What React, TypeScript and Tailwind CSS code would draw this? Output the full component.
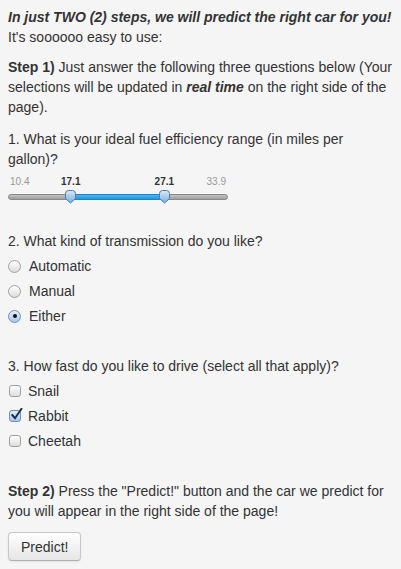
import { useState } from "react"

const MIN = 10.4
const MAX = 33.9
const TRACK_W = 220

const pct = (v: number) => ((v - MIN) / (MAX - MIN)) * TRACK_W

function Thumb({ value }: { value: number }) {
	return (
		<svg
			className="absolute top-[21px] -ml-[6.5px]"
			style={{ left: pct(value) }}
			width="13"
			height="14"
			viewBox="0 0 13 14">
			<defs>
				<linearGradient id="thumbFill" x1="0" y1="0" x2="0" y2="1">
					<stop offset="0" stopColor="#d9e9f8" />
					<stop offset="1" stopColor="#76aee3" />
				</linearGradient>
			</defs>
			<path
				d="M1.5 3.5 Q1.5 0.5 4.5 0.5 H8.5 Q11.5 0.5 11.5 3.5 V8.5 L6.5 13 L1.5 8.5 Z"
				fill="url(#thumbFill)"
				stroke="#4a7db5"
				strokeWidth="1"
			/>
		</svg>
	)
}

function RangeSlider({ from, to }: { from: number; to: number }) {
	return (
		<div className="relative h-[62px] w-[220px] font-['Liberation_Sans',Arial,sans-serif] text-[10px] leading-[12px]">
			<span className="absolute left-[2px] top-[7px] text-[#999]">{MIN}</span>
			<span className="absolute right-[2px] top-[7px] text-[#999]">{MAX}</span>
			<span className="absolute top-[7px] -translate-x-1/2 font-bold text-[#333]" style={{ left: pct(from) }}>
				{from}
			</span>
			<span className="absolute top-[7px] -translate-x-1/2 font-bold text-[#333]" style={{ left: pct(to) }}>
				{to}
			</span>
			<div className="absolute left-0 top-[25px] h-[6px] w-full rounded-full border border-[#8a8a8a] bg-gradient-to-b from-[#c4c4c4] to-[#9e9e9e]" />
			<div
				className="absolute top-[25px] h-[6px] border-y border-[#2780c0] bg-gradient-to-b from-[#4fb3ec] to-[#2496d8]"
				style={{ left: pct(from), width: pct(to) - pct(from) }}
			/>
			<Thumb value={from} />
			<Thumb value={to} />
		</div>
	)
}

function Radio({ label, checked, onSelect }: { label: string; checked: boolean; onSelect: () => void }) {
	return (
		<label className="flex h-5 cursor-pointer items-center gap-[8px]" onClick={onSelect}>
			<span
				className={
					checked
						? "flex h-[13px] w-[13px] items-center justify-center rounded-full border border-[#6e8fbd] bg-gradient-to-b from-[#e4eefa] to-[#a9c6ec]"
						: "flex h-[13px] w-[13px] items-center justify-center rounded-full border border-[#a0a0a0] bg-gradient-to-b from-white to-[#dcdcdc]"
				}>
				{checked && <span className="h-[4px] w-[4px] rounded-full bg-[#111]" />}
			</span>
			<span>{label}</span>
		</label>
	)
}

function Checkbox({ label, checked, onToggle }: { label: string; checked: boolean; onToggle: () => void }) {
	return (
		<label className="flex h-5 cursor-pointer items-center gap-[8px]" onClick={onToggle}>
			<span
				className={
					checked
						? "relative ml-[1px] h-[12px] w-[12px] rounded-[3px] border border-[#6e8fbd] bg-gradient-to-b from-[#e4eefa] to-[#a9c6ec]"
						: "relative ml-[1px] h-[12px] w-[12px] rounded-[3px] border border-[#a0a0a0] bg-gradient-to-b from-white to-[#dedede]"
				}>
				{checked && (
					<svg className="absolute -top-[3px] left-[0px]" width="13" height="13" viewBox="0 0 13 13">
						<path d="M2.2 7 L5 10.2 L11.5 0.8" fill="none" stroke="#1d2c52" strokeWidth="2" strokeLinecap="round" />
					</svg>
				)}
			</span>
			<span className="-ml-[1px]">{label}</span>
		</label>
	)
}

export default function App() {
	const [transmission, setTransmission] = useState("Either")
	const [speeds, setSpeeds] = useState<string[]>(["Rabbit"])

	const toggleSpeed = (s: string) =>
		setSpeeds((prev) => (prev.includes(s) ? prev.filter((x) => x !== s) : [...prev, s]))

	return (
		<div className="h-[569px] w-[401px] overflow-hidden bg-[#f5f5f5] px-2 pt-[7px] font-['Liberation_Sans',Arial,sans-serif] text-[14px] leading-5 text-[#333]">
			<p className="mb-[10px]">
				<b>
					<i>In just TWO (2) steps, we will predict the right car for you!</i>
				</b>
				<br />
				It's soooooo easy to use:
			</p>
			<p className="mb-[12px]">
				<b>Step 1)</b> Just answer the following three questions below (Your selections will be updated in{" "}
				<b>
					<i>real time</i>
				</b>{" "}
				on the right side of the page).
			</p>

			<div>1. What is your ideal fuel efficiency range (in miles per gallon)?</div>
			<RangeSlider from={17.1} to={27.1} />

			<div className="flex flex-col gap-[5px]">
				<div>2. What kind of transmission do you like?</div>
				{["Automatic", "Manual", "Either"].map((t) => (
					<Radio key={t} label={t} checked={transmission === t} onSelect={() => setTransmission(t)} />
				))}
			</div>

			<div className="mt-[30px] flex flex-col gap-[5px]">
				<div>3. How fast do you like to drive (select all that apply)?</div>
				{["Snail", "Rabbit", "Cheetah"].map((s) => (
					<Checkbox key={s} label={s} checked={speeds.includes(s)} onToggle={() => toggleSpeed(s)} />
				))}
			</div>

			<p className="mt-[30px] mb-[11px]">
				<b>Step 2)</b> Press the "Predict!" button and the car we predict for you will appear in the right side of
				the page!
			</p>
			<button className="h-[29px] rounded-[4px] border border-[#c8c8c8] border-b-[#b0b0b0] bg-gradient-to-b from-white to-[#e6e6e6] px-3 text-[14px] leading-5 text-[#333] shadow-[inset_0_1px_0_rgba(255,255,255,0.2),0_1px_2px_rgba(0,0,0,0.08)]">
				Predict!
			</button>
		</div>
	)
}
